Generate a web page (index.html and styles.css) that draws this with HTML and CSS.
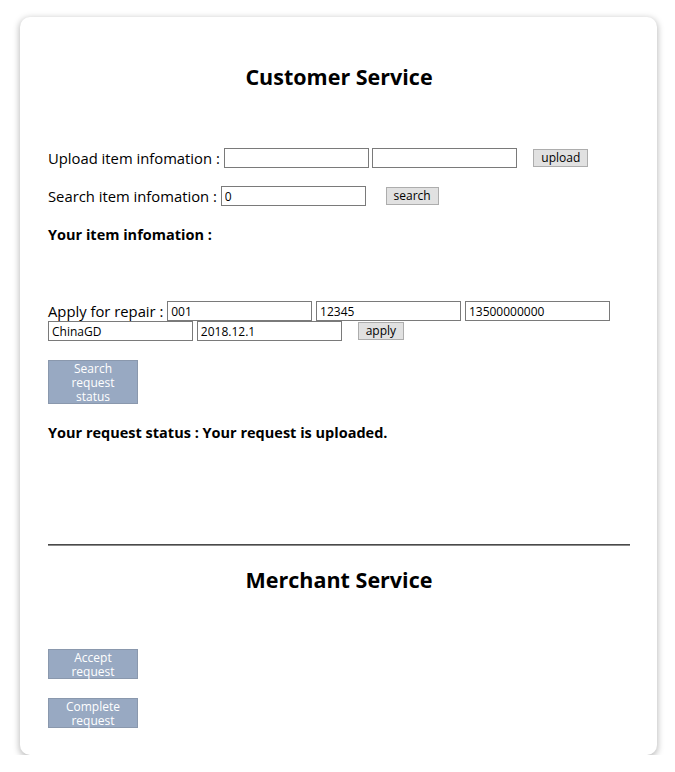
FILE: index.html
```html
<!DOCTYPE html>
<html lang="en">
<head>
<meta charset="UTF-8" />
<meta name="viewport" content="width=device-width, initial-scale=1" />
<title>Repair Service</title>
<link rel="stylesheet" href="styles.css">
</head>
<body>

<div class="card">
  <h2 class="title">Customer Service</h2>

  <div class="row upload-row">
    <span class="label">Upload item infomation :</span>
    <input type="text" class="field">
    <input type="text" class="field">
    <button class="btn btn-upload">upload</button>
  </div>

  <div class="row search-row">
    <span class="label">Search item infomation :</span>
    <input type="text" class="field" value="0">
    <button class="btn btn-search">search</button>
  </div>

  <p class="info">Your item infomation :</p>

  <div class="row apply-row">
    <span class="label">Apply for repair :</span>
    <input type="text" class="field" value="001">
    <input type="text" class="field" value="12345">
    <input type="text" class="field" value="13500000000">
    <input type="text" class="field" value="ChinaGD">
    <input type="text" class="field" value="2018.12.1">
    <button class="btn btn-apply">apply</button>
  </div>

  <button class="block-btn status-btn">Search request status</button>

  <p class="info">Your request status : Your request is uploaded.</p>

  <hr class="divider">

  <h2 class="title merchant">Merchant Service</h2>

  <button class="block-btn accept-btn">Accept request</button>
  <button class="block-btn complete-btn">Complete request</button>
</div>

</body>
</html>
```

FILE: styles.css
```css
body {
  margin: 0;
  background: #fff;
  font-family: 'Segoe UI', 'Open Sans', 'Noto Sans', sans-serif;
  color: #000;
}

.card {
  width: 637px;
  height: 738px;
  box-sizing: border-box;
  margin: 17px 0 0 20px;
  padding: 0 27px 0 28px;
  background: #fff;
  border-radius: 10px;
  box-shadow: 0 2px 6px 1px rgba(0, 0, 0, 0.25);
}

.title {
  margin: 0;
  padding-top: 45px;
  font-size: 21.5px;
  line-height: 30px;
  text-align: center;
  font-weight: bold;
}

.row {
  font-size: 14.8px;
  line-height: 20px;
}

.upload-row { margin-top: 56px; }
.search-row { margin-top: 18px; }
.apply-row { margin-top: 56px; }

.field {
  width: 145px;
  height: 20px;
  box-sizing: border-box;
  border: 1px solid #7a7a7a;
  padding: 0 3px;
  margin: 0;
  font-family: inherit;
  font-size: 12px;
  vertical-align: top;
}

.btn {
  height: 18px;
  box-sizing: border-box;
  margin: 1px 0 0 12px;
  padding: 0 7px;
  border: 1px solid #adadad;
  background: #e1e1e1;
  font-family: inherit;
  font-size: 12px;
  line-height: 16px;
  vertical-align: top;
}

.btn-search { margin-left: 16px; }

.info {
  margin: 19px 0 0;
  font-size: 14.5px;
  font-weight: bold;
  line-height: 20px;
}

.block-btn {
  display: block;
  width: 90px;
  box-sizing: border-box;
  padding: 1px 4px;
  border: 1px solid #8a98ad;
  background: #98a9c2;
  color: #fff;
  font-family: inherit;
  font-size: 12px;
  line-height: 14px;
}

.status-btn { margin-top: 19px; height: 44px; }
.accept-btn { margin-top: 54px; height: 30px; }
.complete-btn { margin-top: 19px; height: 30px; }

.divider {
  margin: 101px 0 0;
  border: 0;
  border-top: 1px solid #4a4a4a;
  border-bottom: 1px solid #8a8a8a;
}

.merchant { padding-top: 19px; }
```
